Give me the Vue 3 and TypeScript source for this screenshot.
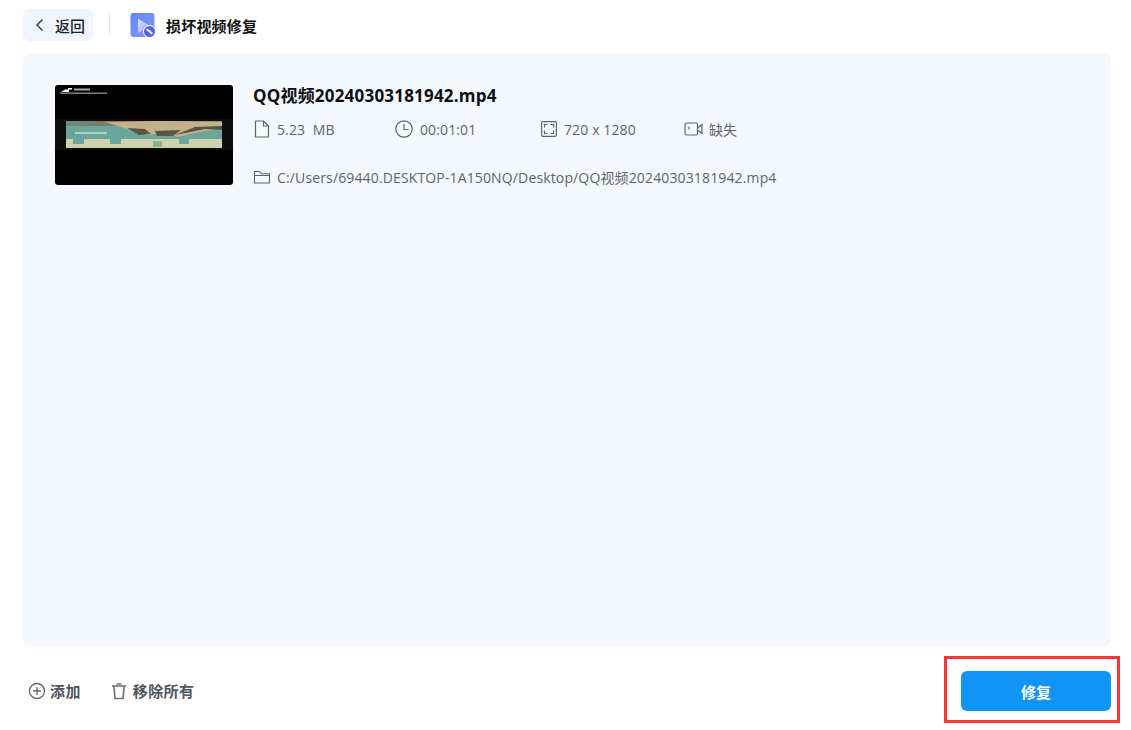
<script setup lang="ts">
interface Meta { key: string; text: string; width: string }
const metas: Meta[] = [
  { key: 'file', text: '5.23  MB', width: '142px' },
  { key: 'clock', text: '00:01:01', width: '145px' },
  { key: 'size', text: '720 x 1280', width: '144px' },
  { key: 'video', text: '缺失', width: 'auto' },
]
</script>

<template>
  <div class="page">
    <header class="top">
      <button class="back">
        <svg class="chev" viewBox="0 0 10 14" width="10" height="14"><path d="M7.5 1.5 2 7l5.5 5.5" fill="none" stroke="#3d4450" stroke-width="1.5" /></svg>
        <span>返回</span>
      </button>
      <i class="divider"></i>
      <svg class="logo" viewBox="0 0 26 26" width="26" height="26">
        <defs>
          <linearGradient id="lg" x1="0" y1="0" x2="1" y2="1">
            <stop offset="0" stop-color="#5f86f8" />
            <stop offset="1" stop-color="#8b97fb" />
          </linearGradient>
          <linearGradient id="tri" x1="0" y1="0" x2="1" y2="1">
            <stop offset="0" stop-color="#d5dffe" />
            <stop offset="1" stop-color="#98a8fb" />
          </linearGradient>
        </defs>
        <rect x="0.5" y="1" width="24" height="24" rx="3" fill="url(#lg)" />
        <path d="M8 6.5 20 14 8 21.5Z" fill="url(#tri)" />
        <circle cx="19.5" cy="19.5" r="6.5" fill="#fff" />
        <circle cx="19.5" cy="19.5" r="5.5" fill="#4f63ea" />
        <path d="M17.2 17.6 20.8 20.6" stroke="#fff" stroke-width="2" stroke-linecap="round" />
        <circle cx="21.6" cy="21.2" r="1.1" fill="#fff" />
      </svg>
      <h1 class="page-title">损坏视频修复</h1>
    </header>

    <main class="panel">
      <article class="item">
        <svg class="thumb" viewBox="0 0 178 100" width="178" height="100">
          <defs>
            <linearGradient id="sky" x1="0" y1="0" x2="1" y2="0">
              <stop offset="0" stop-color="#6d8a80" />
              <stop offset="0.3" stop-color="#7d7a60" />
              <stop offset="0.6" stop-color="#c9b48e" />
              <stop offset="1" stop-color="#8a8f78" />
            </linearGradient>
            <filter id="soft" x="-5%" y="-5%" width="110%" height="110%">
              <feGaussianBlur stdDeviation="0.6" />
            </filter>
          </defs>
          <rect width="178" height="100" rx="3" fill="#000" />
          <g filter="url(#soft)">
            <rect y="34" width="178" height="31" fill="#0c0f10" />
            <rect x="11" y="36" width="156" height="27" fill="#6aa69b" />
            <rect x="11" y="36" width="156" height="5" fill="url(#sky)" />
            <path d="M50 37H167V44L150 46 122 52 112 48 92 50 78 46 66 42Z" fill="#c4b08c" />
            <path d="M72 43 90 44 96 49 84 50ZM100 46 126 45 118 51 102 51Z" fill="#5a5744" />
            <path d="M120 50 150 44 167 45V41L140 42Z" fill="#565142" />
            <rect x="11" y="54" width="156" height="9" fill="#cfd2aa" />
            <rect x="18" y="54" width="11" height="5" fill="#6aa69b" />
            <rect x="55" y="54" width="11" height="5" fill="#6aa69b" />
            <rect x="98" y="56" width="9" height="6" fill="#8db09a" />
            <rect x="124" y="54" width="10" height="5" fill="#6aa69b" />
            <rect x="20" y="47" width="32" height="2" fill="#bcdcd4" opacity="0.8" />
            <path d="M6 7 10 4.5H13V3H17V4.5H14V7Z" fill="#fff" />
            <rect x="19" y="3.5" width="16" height="2" fill="#a5a5a5" />
            <rect x="5" y="7.5" width="47" height="1.4" fill="#8a8a8a" />
          </g>
        </svg>
        <div class="info">
          <h2 class="name">QQ视频20240303181942.mp4</h2>
          <ul class="metas">
            <li v-for="m in metas" :key="m.key" class="meta" :class="`meta-${m.key}`" :style="{ width: m.width }">
              <svg v-if="m.key === 'file'" viewBox="0 0 18 18" width="18" height="18" class="ic">
                <path d="M2.5 1h8L15.5 6v11h-13ZM10.5 1v5h5" fill="none" stroke="#5d6470" stroke-width="1.2" />
              </svg>
              <svg v-else-if="m.key === 'clock'" viewBox="0 0 18 18" width="18" height="18" class="ic">
                <circle cx="9" cy="9" r="8.2" fill="none" stroke="#5d6470" stroke-width="1.2" />
                <path d="M9 4v5.5h4.5" fill="none" stroke="#5d6470" stroke-width="1.2" />
              </svg>
              <svg v-else-if="m.key === 'size'" viewBox="0 0 18 18" width="18" height="18" class="ic">
                <rect x="1.6" y="1.6" width="14.8" height="14.8" rx="1.5" fill="none" stroke="#5d6470" stroke-width="1.2" />
                <path d="M4.5 7.5v-3h3M10.5 4.5h3v3M13.5 10.5v3h-3M7.5 13.5h-3v-3" fill="none" stroke="#5d6470" stroke-width="1.2" />
              </svg>
              <svg v-else viewBox="0 0 20 18" width="20" height="18" class="ic">
                <rect x="1" y="3" width="12.5" height="12" rx="1.5" fill="none" stroke="#5d6470" stroke-width="1.2" />
                <path d="M13.5 8 18 4.5v9L13.5 10M5 6.5v3" fill="none" stroke="#5d6470" stroke-width="1.2" />
              </svg>
              <span>{{ m.text }}</span>
            </li>
          </ul>
          <div class="path">
            <svg viewBox="0 0 18 18" width="18" height="18" class="ic">
              <path d="M1.5 15V3.5h5l2 2.2h8V15ZM1.5 7.5h15" fill="none" stroke="#5d6470" stroke-width="1.1" />
            </svg>
            <span>C:/Users/69440.DESKTOP-1A150NQ/Desktop/QQ视频20240303181942.mp4</span>
          </div>
        </div>
      </article>
    </main>

    <footer class="bottom">
      <button class="tool">
        <svg viewBox="0 0 18 18" width="18" height="18"><circle cx="9" cy="9" r="7.5" fill="none" stroke="#5d6470" stroke-width="1.3" /><path d="M9 5v8M5 9h8" stroke="#5d6470" stroke-width="1.3" /></svg>
        <span>添加</span>
      </button>
      <button class="tool">
        <svg viewBox="0 0 18 18" width="18" height="18"><path d="M2 4h14M6.5 2h5M3.8 4l1.2 12.5h8L14.2 4" fill="none" stroke="#6b717c" stroke-width="1.6" /></svg>
        <span>移除所有</span>
      </button>
      <div class="repair-wrap">
        <button class="repair">修复</button>
        <i class="mark"></i>
      </div>
    </footer>
  </div>
</template>

<style>
html, body { margin: 0; background: #fff; }
</style>

<style scoped>
.page {
  width: 1131px;
  height: 730px;
  box-sizing: border-box;
  padding: 9px 20px 0 23px;
  display: flex;
  flex-direction: column;
  font-family: "Open Sans", "Noto Sans CJK SC", sans-serif;
  overflow: hidden;
  background: #fff;
}
button { font-family: inherit; border: 0; padding: 0; background: none; }
.top { display: flex; align-items: center; height: 32px; }
.back {
  width: 70px;
  height: 32px;
  border-radius: 7px;
  background: #eef5ff;
  display: flex;
  align-items: center;
  padding-left: 12px;
  box-sizing: border-box;
  gap: 10px;
  font-size: 15px;
  font-weight: 500;
  color: #1f2329;
}
.divider { width: 1px; height: 24px; background: #e6e8eb; margin: 0 20px 0 16px; }
.logo { display: block; }
.page-title { margin: 0 0 0 10px; font-size: 15px; font-weight: 700; letter-spacing: 0.2px; color: #111; }
.panel {
  height: 594px;
  margin-top: 12px;
  border-radius: 8px;
  background: #f4f9ff;
  padding: 32px;
  box-sizing: border-box;
}
.item { display: flex; }
.thumb { display: block; flex: none; }
.info { margin-left: 20px; }
.name { margin: 0; font-size: 17px; font-weight: 700; line-height: 22px; letter-spacing: 0.2px; color: #0b0f14; }
.metas { list-style: none; display: flex; margin: 11px 0 0; padding: 0; height: 22px; }
.meta { display: flex; align-items: center; gap: 6px; font-size: 14px; letter-spacing: 0.12px; color: #5d6470; white-space: pre; }
.meta-clock { gap: 7px; }
.meta-video { gap: 5px; letter-spacing: 0; }
.ic { display: block; flex: none; }
.path { display: flex; align-items: center; gap: 6px; margin-top: 26px; height: 22px; font-size: 14px; letter-spacing: 0.14px; color: #5d6470; }
.bottom { display: flex; align-items: center; flex: 1; padding-left: 5px; padding-top: 4px; }
.tool { display: flex; align-items: center; gap: 4px; font-size: 15px; font-weight: 700; letter-spacing: 0.4px; color: #50565f; margin-right: 29px; }
.tool + .tool { gap: 5px; }
.repair-wrap { position: relative; margin-left: auto; margin-top: 1px; }
.repair {
  display: block;
  width: 150px;
  height: 40px;
  border-radius: 6px;
  background: #1094f6;
  color: #fff;
  font-size: 15px;
  font-weight: 700;
}
.mark {
  position: absolute;
  left: -17px;
  top: -15px;
  width: 176px;
  height: 67px;
  box-sizing: border-box;
  border: 3px solid #f53838;
  pointer-events: none;
}
</style>
